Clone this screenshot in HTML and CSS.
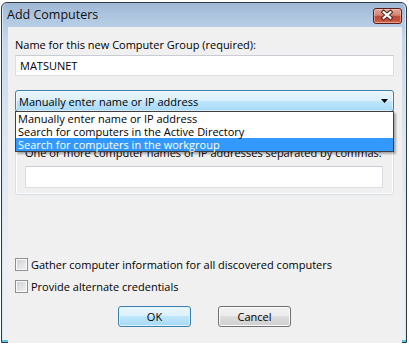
FILE: index.html
```html
<!DOCTYPE html>
<html>
<head>
    <title>Add Computers</title>
    <link rel="stylesheet" href="styles.css">
</head>
<body>
    <div class="window">
        <div class="titlebar">
            <span class="title">Add Computers</span>
            <span class="close-btn">
                <svg width="29" height="16" viewBox="0 0 29 16">
                    <path d="M11 4 L18 10 M18 4 L11 10" stroke="#4a1f18" stroke-width="4.2" stroke-linecap="square" fill="none"/>
                    <path d="M11 4 L18 10 M18 4 L11 10" stroke="#ffffff" stroke-width="2.2" stroke-linecap="square" fill="none"/>
                </svg>
            </span>
        </div>

        <div class="client">
            <div class="field-label">Name for this new Computer Group (required):</div>
            <div class="textbox">MATSUNET</div>

            <div class="combo-wrap">
                <div class="combo">
                    <span>Manually enter name or IP address</span>
                    <svg width="7" height="4" viewBox="0 0 7 4"><path d="M0 0 H7 L3.5 4 Z" fill="#000"/></svg>
                </div>
                <ul class="dropdown">
                    <li>Manually enter name or IP address</li>
                    <li>Search for computers in the Active Directory</li>
                    <li class="selected">Search for computers in the workgroup</li>
                </ul>
            </div>

            <div class="groupbox">
                <div class="group-label">One or more computer names or IP addresses separated by commas:</div>
                <div class="textbox group-input"></div>
            </div>

            <div class="check-row first"><span class="checkbox"></span>Gather computer information for all discovered computers</div>
            <div class="check-row"><span class="checkbox"></span>Provide alternate credentials</div>

            <div class="buttons">
                <button class="btn default">OK</button>
                <button class="btn">Cancel</button>
            </div>
        </div>
    </div>
</body>
</html>
```

FILE: styles.css
```css
/* 基础样式 */
body {
    margin: 0;
    background: #fff;
    font-family: "Open Sans", "Noto Sans", sans-serif;
    font-size: 11px;
    line-height: 15px;
    color: #000;
}

/* 窗口外框 */
.window {
    margin: 2px 0 0 1px;
    width: 406px;
    height: 341px;
    box-sizing: border-box;
    border: 1px solid #2f3b49;
    border-radius: 6px 6px 0 0;
    background: linear-gradient(#9fb8d4 0, #b9cfe7 24px, #c6d8eb 40px, #dfe7f0 140px, #eceff3 260px, #eef0f2 100%);
    box-shadow: inset 0 -2px 0 #5ec5ec, inset 1px 0 0 #d6e8f5, inset -1px 0 0 #d6e8f5;
    display: flex;
    flex-direction: column;
}

.titlebar {
    height: 24px;
    flex: 0 0 24px;
    display: flex;
    justify-content: space-between;
    align-items: flex-start;
    padding-left: 5px;
}

.title {
    font-size: 12.5px;
    line-height: 24px;
    color: #111;
}

.close-btn {
    margin: 5px 4px 0 0;
    width: 29px;
    height: 16px;
    box-sizing: border-box;
    border: 1px solid #5b1e16;
    border-radius: 3px;
    background: linear-gradient(#e6a898, #d4826f 45%, #bf4c37 52%, #c5503a 80%, #d6735a);
    box-shadow: inset 0 0 0 1px rgba(255, 220, 210, 0.45);
    display: flex;
    overflow: hidden;
}

.close-btn svg {
    margin: -1px 0 0 -1px;
}

/* 客户区 */
.client {
    flex: 0 0 312px;
    margin: 0 4px 3px 6px;
    background: #f0f0f0;
    padding: 10px 8px 0 7px;
    display: flex;
    flex-direction: column;
}

.textbox {
    margin-top: 3px;
    height: 21px;
    box-sizing: border-box;
    border: 1px solid #dadee3;
    border-top-color: #c9cdd3;
    background: #fff;
    padding-left: 4px;
    line-height: 19px;
}

.combo-wrap {
    position: relative;
    margin-top: 14px;
}

.combo {
    height: 22px;
    box-sizing: border-box;
    border: 1px solid #3c7fb1;
    border-radius: 3px;
    background: linear-gradient(#eaf6fd, #d9f0fc 50%, #bee6fd 50%, #a7d9f5);
    box-shadow: inset 0 0 0 1px rgba(255, 255, 255, 0.5);
    display: flex;
    align-items: center;
    justify-content: space-between;
    padding: 0 5px 0 3px;
}

.dropdown {
    position: absolute;
    top: 21px;
    left: 0;
    right: 0;
    margin: 0;
    padding: 0;
    list-style: none;
    background: #fff;
    border: 1px solid #3f3f3f;
    box-shadow: 2px 2px 2px rgba(0, 0, 0, 0.3);
    z-index: 10;
}

.dropdown li {
    line-height: 13px;
    height: 13px;
    padding-left: 2px;
    white-space: nowrap;
}

.dropdown li.selected {
    background: #3399ff;
    color: #fff;
}

.groupbox {
    margin-top: 13px;
    height: 70px;
    box-sizing: border-box;
    border: 1px solid #d5dfe5;
    border-radius: 3px;
    box-shadow: inset 0 0 0 1px #fff;
    padding: 19px 10px 6px 9px;
}

.group-label {
    white-space: nowrap;
}

.group-input {
    margin-top: 6px;
    height: 22px;
}

/* 复选框 */
.check-row {
    margin-top: 7px;
    height: 15px;
    display: flex;
    align-items: center;
    gap: 3px;
}

.check-row.first {
    margin-top: 62px;
}

.checkbox {
    width: 13px;
    height: 13px;
    box-sizing: border-box;
    border: 1px solid #8e8f8f;
    background: linear-gradient(135deg, #c9cdd3, #f4f4f4);
    box-shadow: inset 0 0 0 1px #fafafa;
}

/* 按钮 */
.buttons {
    margin-top: 12px;
    display: flex;
    justify-content: center;
    gap: 27px;
}

.btn {
    width: 73px;
    height: 21px;
    box-sizing: border-box;
    border: 1px solid #707070;
    border-radius: 3px;
    background: linear-gradient(#f2f2f2, #ebebeb 50%, #dddddd 50%, #cfcfcf);
    box-shadow: inset 0 0 0 1px #fcfcfc;
    font: inherit;
    color: #000;
    padding: 0;
}

.btn.default {
    border-color: #3c7fb1;
    background: linear-gradient(#eaf6fd, #d9f0fc 50%, #bee6fd 50%, #a7d9f5);
    box-shadow: inset 0 0 0 1px #dff2fc;
}
```
